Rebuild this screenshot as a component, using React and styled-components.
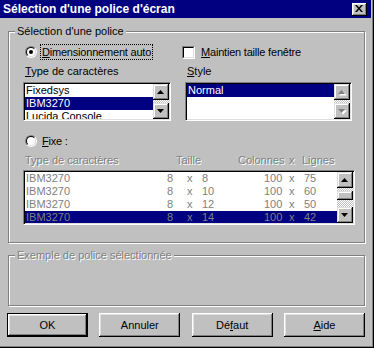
import React from 'react';
import styled, { createGlobalStyle, css } from 'styled-components';

const Global = createGlobalStyle`
  html, body { margin: 0; padding: 0; background: #c0c0c0; }
  body { font-family: "Liberation Sans", Arial, sans-serif; font-size: 11px; }
  * { box-sizing: border-box; }
`;

const embossed = css`
  color: #808080;
  text-shadow: 1px 1px 0 #fff;
`;

const Window = styled.div`
  width: 374px;
  height: 348px;
  overflow: hidden;
  background: #c0c0c0;
  padding: 0 3px 2px 0;
  box-shadow: inset -1px -1px #000, inset -2px -2px #808080;
  display: flex;
  flex-direction: column;
  color: #000;
  font-family: "Liberation Sans", Arial, sans-serif;
  font-size: 11px;
  line-height: 13px;
`;

const TitleBar = styled.div`
  height: 18px;
  flex: none;
  background: #000080;
  color: #fff;
  font-weight: bold;
  font-size: 12px;
  display: flex;
  align-items: center;
  justify-content: space-between;
  padding: 0 4px 0 3px;
`;

const CloseBtn = styled.div`
  width: 15px;
  height: 13px;
  background: #c0c0c0;
  box-shadow: inset -1px -1px #000, inset 1px 1px #fff, inset -2px -2px #808080, inset 2px 2px #dfdfdf;
  display: flex;
  align-items: center;
  justify-content: center;
  padding: 0 1px 1px 0;
`;

const Group = styled.fieldset`
  margin: ${p => p.$mt}px 0 0 8px;
  width: 357px;
  ${p => p.$h && css`height: ${p.$h}px;`}
  padding: 0;
  border: 1px solid #808080;
  box-shadow: inset 1px 1px #fff, 1px 1px #fff;
  min-inline-size: 0;
  flex: none;
`;

const Legend = styled.legend`
  margin-left: 6px;
  padding: 0 2px;
  line-height: 13px;
  font-size: 11px;
  background: #c0c0c0;
  ${p => p.$disabled && embossed}
`;

const GroupBody = styled.div`
  padding: 6px 0 17px 14px;
  display: flex;
  flex-direction: column;
`;

const TopGrid = styled.div`
  display: grid;
  grid-template-columns: 148px 167px;
  column-gap: 14px;
`;

const Column = styled.div`
  display: flex;
  flex-direction: column;
`;

const OptionRow = styled.div`
  height: 16px;
  display: flex;
  align-items: center;
  margin-top: ${p => p.$mt || 0}px;
  margin-left: ${p => p.$ml || 0}px;
`;

const RadioOuter = styled.span`
  width: 12px;
  height: 12px;
  flex: none;
  border-radius: 50%;
  border: 1px solid;
  border-color: #808080 #fff #fff #808080;
`;

const RadioInner = styled.span`
  width: 10px;
  height: 10px;
  display: flex;
  align-items: center;
  justify-content: center;
  border-radius: 50%;
  border: 1px solid;
  border-color: #000 #dfdfdf #dfdfdf #000;
  background: #fff;
  &::after {
    content: '';
    display: ${p => (p.$checked ? 'block' : 'none')};
    width: 4px;
    height: 4px;
    border-radius: 50%;
    background: #000;
  }
`;

const CheckOuter = styled.span`
  width: 13px;
  height: 13px;
  flex: none;
  border: 1px solid;
  border-color: #808080 #fff #fff #808080;
`;

const CheckInner = styled.span`
  display: block;
  width: 11px;
  height: 11px;
  border: 1px solid;
  border-color: #000 #dfdfdf #dfdfdf #000;
  background: #fff;
`;

const OptionText = styled.span`
  margin-left: ${p => p.$gap}px;
  padding: 0 1px;
  height: 16px;
  line-height: 14px;
  letter-spacing: -0.2px;
  border: 1px ${p => (p.$focus ? 'dotted #000' : 'solid transparent')};
  white-space: nowrap;
`;

const FieldLabel = styled.div`
  margin-top: 5px;
  margin-left: 2px;
  height: 13px;
  white-space: nowrap;
`;

const ListBox = styled.div`
  margin-top: ${p => p.$mt}px;
  height: ${p => p.$h}px;
  width: ${p => (p.$w ? `${p.$w}px` : 'auto')};
  border: 1px solid;
  border-color: #808080 #fff #fff #808080;
  box-shadow: inset 1px 1px #000, inset -1px -1px #dfdfdf;
  padding: 1px;
  display: flex;
  background: #fff;
`;

const Rows = styled.div`
  flex: 1;
  overflow: hidden;
  background: #fff;
`;

const Row = styled.div`
  height: 13px;
  line-height: 13px;
  padding-left: 1px;
  white-space: nowrap;
  background: ${p => (p.$sel ? '#000080' : 'transparent')};
  color: ${p => (p.$muted ? '#808080' : p.$sel ? '#fff' : '#000')};
`;

const GridRow = styled(Row)`
  display: grid;
  grid-template-columns: 141px 20px 15px 62px 25px 15px 1fr;
`;

const HeaderRow = styled.div`
  margin-top: 5px;
  height: 13px;
  padding-left: 2px;
  display: grid;
  grid-template-columns: 151px 62px 51px 13px 1fr;
  white-space: nowrap;
  ${embossed}
`;

const ScrollBar = styled.div`
  width: 16px;
  flex: none;
  display: flex;
  flex-direction: column;
`;

const ScrollBtn = styled.div`
  width: 16px;
  height: ${p => p.$h || 16}px;
  flex: none;
  background: #c0c0c0;
  box-shadow: inset -1px -1px #000, inset 1px 1px #dfdfdf, inset -2px -2px #808080, inset 2px 2px #fff;
  display: flex;
  align-items: center;
  justify-content: center;
`;

const Track = styled.div`
  flex: 1;
  background: repeating-conic-gradient(#fff 0 25%, #c0c0c0 0 50%) 0 0 / 2px 2px;
  display: flex;
  flex-direction: column;
  padding-top: ${p => p.$thumbTop || 0}px;
`;

const Thumb = styled(ScrollBtn)`
  height: ${p => p.$h}px;
`;

const ButtonRow = styled.div`
  margin: 7px 0 0 7px;
  width: 358px;
  display: flex;
  justify-content: space-between;
`;

const Button = styled.button`
  width: 81px;
  height: 24px;
  padding: 0;
  font-family: "Liberation Sans", Arial, sans-serif;
  font-size: 11px;
  color: #000;
  background: #c0c0c0;
  border: ${p => (p.$default ? '1px solid #000' : 'none')};
  box-shadow: inset -1px -1px #000, inset 1px 1px #fff, inset -2px -2px #808080, inset 2px 2px #dfdfdf;
`;

const Arrow = ({ up, disabled }) => (
  <svg width="8" height="5" viewBox="0 0 8 5" style={{ display: 'block', overflow: 'visible' }}>
    {disabled && (
      <polygon
        points={up ? '4.5,1 8.5,5 0.5,5' : '0.5,1 8.5,1 4.5,5'}
        fill="#fff"
        transform="translate(0.5,0.5)"
      />
    )}
    <polygon points={up ? '3.5,0 7,4 0,4' : '0,0 7,0 3.5,4'} fill={disabled ? '#808080' : '#000'} />
  </svg>
);

const VScroll = ({ disabled, thumb }) => (
  <ScrollBar>
    <ScrollBtn>
      <Arrow up disabled={disabled} />
    </ScrollBtn>
    <Track $thumbTop={thumb ? 3 : 0}>{thumb && <Thumb $h={9} />}</Track>
    <ScrollBtn>
      <Arrow disabled={disabled} />
    </ScrollBtn>
  </ScrollBar>
);

const Radio = ({ checked }) => (
  <RadioOuter>
    <RadioInner $checked={checked} />
  </RadioOuter>
);

const Check = () => (
  <CheckOuter>
    <CheckInner />
  </CheckOuter>
);

const fixedRows = [
  ['8', '8', '75'],
  ['8', '10', '60'],
  ['8', '12', '50'],
  ['8', '14', '42'],
];

export default function App() {
  return (
    <>
      <Global />
      <Window>
        <TitleBar>
          <span>Sélection d'une police d'écran</span>
          <CloseBtn>
            <svg width="8" height="7" viewBox="0 0 8 7">
              <path d="M0 0h2l2 2.4L6 0h2L5 3.5 8 7H6L4 4.6 2 7H0l3-3.5z" fill="#000" />
            </svg>
          </CloseBtn>
        </TitleBar>

        <Group $mt={7}>
          <Legend>Sélection d'une police</Legend>
          <GroupBody>
            <TopGrid>
              <Column>
                <OptionRow $ml={2}>
                  <Radio checked />
                  <OptionText $gap={3} $focus>
                    <u>D</u>imensionnement auto
                  </OptionText>
                </OptionRow>
                <FieldLabel>
                  <u>T</u>ype de caractères
                </FieldLabel>
                <ListBox $mt={4} $h={39}>
                  <Rows>
                    <Row>Fixedsys</Row>
                    <Row $sel>IBM3270</Row>
                    <Row>Lucida Console</Row>
                  </Rows>
                  <VScroll />
                </ListBox>
              </Column>
              <Column>
                <OptionRow $ml={-3}>
                  <Check />
                  <OptionText $gap={4}>
                    <u>M</u>aintien taille fenêtre
                  </OptionText>
                </OptionRow>
                <FieldLabel>
                  <u>S</u>tyle
                </FieldLabel>
                <ListBox $mt={4} $h={39}>
                  <Rows>
                    <Row $sel>Normal</Row>
                  </Rows>
                  <VScroll disabled />
                </ListBox>
              </Column>
            </TopGrid>

            <OptionRow $mt={12} $ml={2}>
              <Radio />
              <OptionText $gap={3}>
                <u>F</u>ixe :
              </OptionText>
            </OptionRow>

            <HeaderRow>
              <span>Type de caractères</span>
              <span>Taille</span>
              <span>Colonnes</span>
              <span>x</span>
              <span>Lignes</span>
            </HeaderRow>

            <ListBox $mt={3} $h={55} $w={332}>
              <Rows>
                {fixedRows.map(([t, n, l], i) => (
                  <GridRow key={i} $muted $sel={i === 3}>
                    <span>IBM3270</span>
                    <span>{t}</span>
                    <span>x</span>
                    <span>{n}</span>
                    <span>100</span>
                    <span>x</span>
                    <span>{l}</span>
                  </GridRow>
                ))}
              </Rows>
              <VScroll thumb />
            </ListBox>
          </GroupBody>
        </Group>

        <Group $mt={6} $h={57}>
          <Legend $disabled>Exemple de police sélectionnée</Legend>
        </Group>

        <ButtonRow>
          <Button $default>OK</Button>
          <Button>Annuler</Button>
          <Button>
            Dé<u>f</u>aut
          </Button>
          <Button>
            <u>A</u>ide
          </Button>
        </ButtonRow>
      </Window>
    </>
  );
}
